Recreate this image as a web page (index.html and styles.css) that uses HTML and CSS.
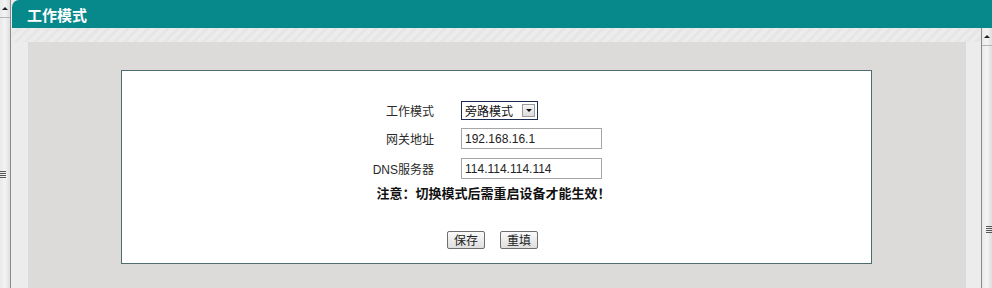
FILE: index.html
```html
<!DOCTYPE html>
<html lang="zh-CN">
<head>
    <meta charset="UTF-8" />
    <title>工作模式</title>
    <link rel="stylesheet" href="styles.css">
</head>
<body>
    <div class="scroll scroll-left">
        <div class="scroll-btn"><span class="arrow"></span></div>
        <div class="grip grip-left"><i></i><i></i><i></i><i></i></div>
    </div>

    <div class="main">
        <div class="title-bar">工作模式</div>
        <div class="frame">
            <div class="content">
                <div class="stripe-top"></div>
                <div class="panel-wrap">
                    <div class="panel">
                        <form class="box">
                            <div class="row">
                                <label class="label">工作模式</label>
                                <span class="select">
                                    <span class="select-text">旁路模式</span>
                                    <span class="select-btn"><span class="arrow-down"></span></span>
                                </span>
                            </div>
                            <div class="row row-2">
                                <label class="label">网关地址</label>
                                <input class="field" type="text" value="192.168.16.1">
                            </div>
                            <div class="row row-3">
                                <label class="label">DNS服务器</label>
                                <input class="field" type="text" value="114.114.114.114">
                            </div>
                            <p class="note">注意：切换模式后需重启设备才能生效！</p>
                            <div class="buttons">
                                <button type="button" class="btn">保存</button>
                                <button type="reset" class="btn">重填</button>
                            </div>
                        </form>
                    </div>
                </div>
            </div>
            <div class="scroll scroll-right">
                <div class="scroll-btn"><span class="arrow"></span></div>
                <div class="grip grip-right"><i></i><i></i><i></i><i></i></div>
            </div>
        </div>
    </div>
</body>
</html>
```

FILE: styles.css
```css
body {
    margin: 0;
    padding: 0;
    width: 992px;
    height: 288px;
    overflow: hidden;
    display: flex;
    background: #ececec;
    font-family: "Liberation Sans", "Noto Sans CJK SC", sans-serif;
    font-size: 12px;
    color: #222;
}

/* BARRAS DE SCROLL (restos de los frames) */
.scroll {
    position: relative;
    width: 10px;
    background: linear-gradient(90deg, #e9e9e9 0%, #f4f4f4 50%, #dedede 100%);
    box-sizing: border-box;
}

.scroll-left {
    width: 11px;
    height: 288px;
    border-right: 1px solid #8a8a8a;
    margin-right: 1px;
}

.scroll-right {
    width: 11px;
    border-left: 1px solid #8a8a8a;
}

.scroll-btn {
    height: 17px;
    border-bottom: 1px solid #b5b5b5;
    display: flex;
    align-items: center;
    justify-content: center;
}

.arrow {
    width: 0;
    height: 0;
    border-left: 3px solid transparent;
    border-right: 3px solid transparent;
    border-bottom: 3px solid #222;
}

.grip {
    position: absolute;
    display: flex;
    flex-direction: column;
    gap: 1px;
}

.grip i {
    display: block;
    width: 6px;
    height: 1px;
    background: #555;
}

.grip-left { top: 171px; left: 0; }
.grip-right { top: 198px; right: 0; }

/* ZONA PRINCIPAL */
.main {
    flex: 1;
    display: flex;
    flex-direction: column;
}

.title-bar {
    height: 28px;
    line-height: 30px;
    background: #07898c;
    border-top-left-radius: 7px;
    color: #fff;
    font-family: "Noto Sans CJK SC", sans-serif;
    font-weight: bold;
    font-size: 15px;
    padding-left: 15px;
    box-sizing: border-box;
}

.frame {
    flex: 1;
    display: flex;
}

.content {
    flex: 1;
    display: flex;
    flex-direction: column;
    background: repeating-linear-gradient(135deg, #ececec 0px, #ececec 4px, #e6e6e6 4px, #e6e6e6 7px);
}

.stripe-top {
    height: 14px;
}

.panel-wrap {
    flex: 1;
    padding: 0 15px 0 16px;
    background: linear-gradient(90deg, #ececec 0, #ececec 16px, transparent 16px, transparent calc(100% - 15px), #ececec calc(100% - 15px));
}

.panel {
    height: 100%;
    background: #dcdbd9;
    padding: 28px 94px 0 93px;
    box-sizing: border-box;
}

/* CAJA DEL FORMULARIO */
.box {
    height: 194px;
    background: #fff;
    border: 1px solid #4d6d6e;
    box-sizing: border-box;
    margin: 0;
    padding-top: 29px;
    display: flex;
    flex-direction: column;
}

.row {
    display: flex;
    align-items: center;
    height: 21px;
}

.row-2 { margin-top: 7px; }
.row-3 { margin-top: 9px; }

.label {
    width: 312px;
    padding-right: 27px;
    text-align: right;
    font-size: 12px;
    color: #2a2a2a;
    box-sizing: content-box;
}

.label,
.field,
.select-text {
    font-family: "Liberation Sans", "Noto Sans CJK SC", sans-serif;
}

.select {
    display: flex;
    align-items: center;
    width: 77px;
    height: 19px;
    border: 1px solid #1d2c50;
    box-sizing: border-box;
    background: #fff;
}

.select-text {
    flex: 1;
    padding-left: 3px;
    font-size: 12px;
    color: #111;
}

.select-btn {
    width: 13px;
    height: 13px;
    margin-right: 2px;
    border: 1px solid #9a9a9a;
    background: linear-gradient(#f6f6f6, #dcdcdc);
    box-sizing: border-box;
    display: flex;
    align-items: center;
    justify-content: center;
}

.arrow-down {
    width: 0;
    height: 0;
    border-left: 3px solid transparent;
    border-right: 3px solid transparent;
    border-top: 3px solid #111;
}

.field {
    width: 141px;
    height: 21px;
    border: 1px solid #a5a5a5;
    box-sizing: border-box;
    padding: 0 3px;
    font-size: 12px;
    color: #222;
    outline: none;
}

.note {
    margin: 6px 0 0;
    padding-right: 6px;
    text-align: center;
    font-family: "Noto Sans CJK SC", sans-serif;
    font-weight: bold;
    font-size: 13px;
    line-height: 15px;
    color: #111;
}

.buttons {
    margin-top: 31px;
    display: flex;
    justify-content: center;
    gap: 15px;
    padding-right: 8px;
}

.btn {
    width: 38px;
    height: 18px;
    padding: 0;
    border: 1px solid #6e6e6e;
    border-radius: 2px;
    background: linear-gradient(#fafafa, #dedede);
    font-family: "Noto Sans CJK SC", sans-serif;
    font-size: 12px;
    line-height: 16px;
    color: #222;
}
```
